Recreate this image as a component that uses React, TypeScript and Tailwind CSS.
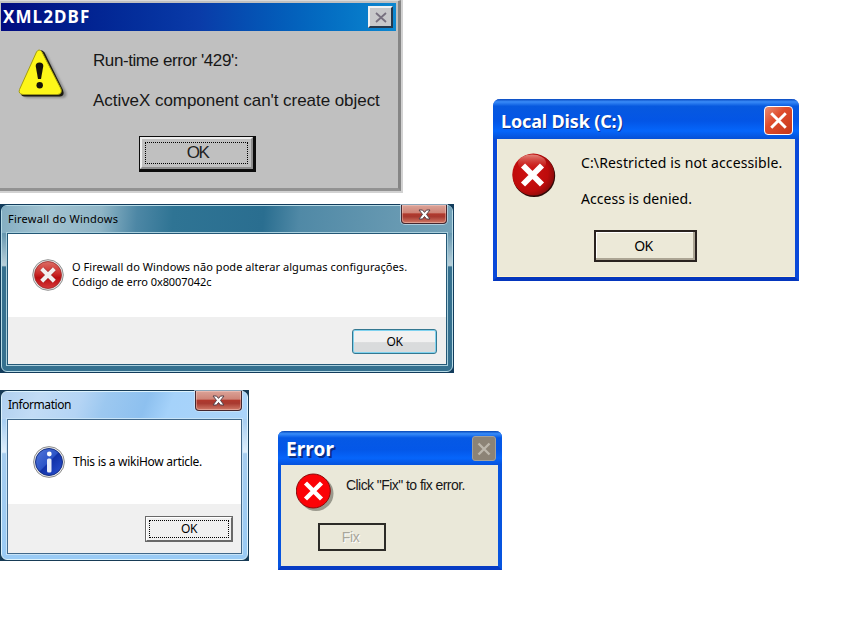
import React from "react";

const segoe = "font-['Noto_Sans','Open_Sans',sans-serif]";
const tahoma = "font-['Noto_Sans','DejaVu_Sans',sans-serif]";
const msSans = "font-['Liberation_Sans',sans-serif]";

function WarningIcon() {
  return (
    <svg width="54" height="54" viewBox="0 0 54 54" className="block shrink-0">
      <defs>
        <filter id="soft" x="-20%" y="-20%" width="140%" height="140%">
          <feGaussianBlur stdDeviation="1" />
        </filter>
      </defs>
      <path d="M26 5Q29 3 31 7L50 44Q52 49 47 50H11Q6 49 8 44Z" fill="#8b8b8b" filter="url(#soft)" />
      <path d="M22 4Q25 0.500 28.500 4.500L47 42Q49 48 44 48.500H8Q4 48 5 43Z" fill="#1b1a10" />
      <path d="M20.500 4Q23 0 26 4L45 41Q46.500 46 41.500 46.500H7Q2 46 3.500 41.500Z" fill="#fdf619" stroke="#a39c13" strokeWidth="1" />
      <path d="M19.700 18Q19.700 14.500 23.500 14.500Q27.300 14.500 27.300 18L25 31H22Z" fill="#15120a" />
      <circle cx="23.700" cy="37.300" r="3.200" fill="#15120a" />
    </svg>
  );
}

function GlossyErrorIcon({ size }: { size: number }) {
  return (
    <svg width={size} height={size} viewBox="0 0 32 32" className="block shrink-0">
      <defs>
        <linearGradient id="redGloss" x1="0" y1="0" x2="0" y2="1">
          <stop offset="0" stopColor="#dc6d65" />
          <stop offset="0.45" stopColor="#cb2b29" />
          <stop offset="0.6" stopColor="#b90d10" />
          <stop offset="1" stopColor="#d6373a" />
        </linearGradient>
      </defs>
      <circle cx="16" cy="16" r="15.300" fill="#e6e6e6" stroke="#8f8f8f" strokeWidth="1" />
      <circle cx="16" cy="16" r="13.500" fill="url(#redGloss)" stroke="#9c2a2a" strokeWidth="0.800" />
      <path d="M10 10L22 22M22 10L10 22" stroke="#8e1515" strokeWidth="5.200" />
      <path d="M9.700 9.700L22.300 22.300M22.300 9.700L9.700 22.300" stroke="#f3efef" strokeWidth="4.200" />
    </svg>
  );
}

function InfoIcon() {
  return (
    <svg width="32" height="32" viewBox="0 0 32 32" className="block shrink-0">
      <defs>
        <linearGradient id="blueGloss" x1="0" y1="0" x2="1" y2="1">
          <stop offset="0" stopColor="#5578d8" />
          <stop offset="0.48" stopColor="#2d55c8" />
          <stop offset="0.52" stopColor="#1232a8" />
          <stop offset="1" stopColor="#2b53d4" />
        </linearGradient>
      </defs>
      <circle cx="16" cy="16" r="15.400" fill="#ececec" stroke="#8d8d8d" strokeWidth="1" />
      <circle cx="16" cy="16" r="13.500" fill="url(#blueGloss)" stroke="#173083" strokeWidth="1" />
      <circle cx="16.300" cy="8" r="2.400" fill="#fff" />
      <rect x="14" y="12.500" width="4.500" height="14" rx="1.500" fill="#e9edf8" />
    </svg>
  );
}

function XpErrorIcon() {
  return (
    <svg width="44" height="46" viewBox="0 0 44 46" className="block shrink-0">
      <defs>
        <radialGradient id="xpRed" cx="0.4" cy="0.45" r="0.6">
          <stop offset="0" stopColor="#cf1212" />
          <stop offset="0.75" stopColor="#bd0b0b" />
          <stop offset="1" stopColor="#8c0b0b" />
        </radialGradient>
        <linearGradient id="xpShine" x1="0" y1="0" x2="0" y2="1">
          <stop offset="0" stopColor="#e3867c" />
          <stop offset="1" stopColor="#d0231c" stopOpacity="0" />
        </linearGradient>
      </defs>
      <circle cx="22" cy="22.800" r="21.200" fill="#2e0907" />
      <circle cx="21.300" cy="21.600" r="21" fill="url(#xpRed)" />
      <ellipse cx="20" cy="10" rx="14" ry="8.500" fill="url(#xpShine)" />
      <path d="M11 12.500L30 31.500M30 12.500L11 31.500" stroke="#fff" strokeWidth="5.800" />
    </svg>
  );
}

function FlatErrorIcon() {
  return (
    <svg width="39" height="39" viewBox="0 0 39 39" className="block shrink-0">
      <circle cx="20" cy="20.500" r="17.500" fill="#9a998d" />
      <circle cx="17.300" cy="18" r="17" fill="#fb0207" stroke="#8b0b0b" strokeWidth="1" />
      <path d="M9.500 10L25.500 26M25.500 10L9.500 26" stroke="#fff" strokeWidth="4.400" />
    </svg>
  );
}

function AeroClose({ className }: { className: string }) {
  return (
    <div
      className={`flex items-center justify-center rounded-b-[4px] border border-t-0 border-[#44272f] bg-[linear-gradient(to_bottom,#dba398_0%,#cf8578_42%,#b0392d_50%,#a83a30_65%,#d07a68_100%)] shadow-[0_0_0_1px_rgba(220,235,245,0.6),inset_0_0_0_1px_rgba(255,220,210,0.4)] ${className}`}
    >
      <svg width="13" height="11" viewBox="0 0 13 11">
        <path d="M1 1H4.500L6.500 3.400L8.500 1H12L8.500 5.400L12 10H8.500L6.500 7.500L4.500 10H1L4.500 5.400Z" fill="#fff" stroke="#544048" strokeWidth="1" />
      </svg>
    </div>
  );
}

function RuntimeDialog() {
  return (
    <section className={`absolute top-0 left-0 h-[193px] w-[403px] border-r-2 border-b-2 border-[#d2d2d2] bg-[#c0c0c0] ${msSans}`}>
      <div className="flex h-full flex-col border-t border-r-3 border-b-3 border-t-[#dadada] border-r-[#858585] border-b-[#929292] pt-[2px] pr-[2px] pl-px">
        <header className="flex h-[28px] shrink-0 items-center justify-between bg-linear-to-r from-[#020a80] via-[#0a3ba8] via-50% to-[#0d87d0] pr-[3px] pl-[2px]">
          <h1 className={`text-[17px] leading-[26px] font-bold tracking-[1.1px] text-white ${tahoma}`}>XML2DBF</h1>
          <div className="flex h-[22px] w-[25px] items-center justify-center border-2 border-t-[#f2f2f2] border-r-[#26384c] border-b-[#26384c] border-l-[#f2f2f2] bg-[#c8c8ca]">
            <svg width="12" height="11" viewBox="0 0 12 11">
              <path d="M1 1L11 10M11 1L1 10" stroke="#77707f" strokeWidth="1.800" />
            </svg>
          </div>
        </header>
        <div className="flex pt-[17px] pl-[15px]">
          <WarningIcon />
          <div className="pt-[3px] pl-[23px] text-[17px] leading-[20px] whitespace-nowrap text-[#171717]">
            <p className="tracking-[-0.42px]">Run-time error '429':</p>
            <p className="mt-[20px] tracking-[-0.05px]">ActiveX component can't create object</p>
          </div>
        </div>
        <button className="mt-[25px] ml-[138px] h-[36px] w-[117px] shrink-0 border-t border-r-3 border-b-3 border-l border-[#0c0c0c] text-[17px] leading-[20px] tracking-[-1.5px] text-[#222]">
          <span className="flex h-full w-full border-2 border-t-[#eee] border-r-[#8e8e8e] border-b-[#8e8e8e] border-l-[#eee] p-[3px]">
            <span className="flex flex-1 items-center justify-center border border-dotted border-black pl-[2px]">OK</span>
          </span>
        </button>
      </div>
    </section>
  );
}

function FirewallDialog() {
  return (
    <section className={`absolute top-[204px] left-0 h-[169px] w-[454px] bg-[#123c5c] p-px ${segoe}`}>
      <div className="flex h-full flex-col rounded-[6px] border border-[#b7dbe6] bg-[linear-gradient(to_bottom,#3f7b9b_0%,#6093ad_15%,#b9d0da_36%,#35708f_37%,#35708f_100%)] px-[5px] pb-[6px]">
        <header className="-mx-[5px] flex h-[27px] shrink-0 items-start justify-between rounded-t-[5px] bg-[linear-gradient(95deg,#84aec2_0%,#a3c3d1_10%,#8fb5c6_22%,#4d87a5_30%,#2f7494_38%,#2a6e90_58%,#5089a6_66%,#74a2b8_100%)] pr-[5px] pl-[6px]">
          <h2 className="pt-[4px] text-[11px] leading-[18px] tracking-[0.25px] text-black">Firewall do Windows</h2>
          <AeroClose className="-mt-px h-[19px] w-[46px]" />
        </header>
        <div className="flex min-h-0 flex-1 flex-col border border-[#245876] bg-white outline outline-[#a9cfdd]">
          <div className="flex h-[83px] shrink-0 pt-[25px] pl-[24px]">
            <GlossyErrorIcon size={32} />
            <div className="pl-[8px] text-[11px] leading-[15px] whitespace-nowrap text-black">
              <p className="tracking-[0.06px]">O Firewall do Windows não pode alterar algumas configurações.</p>
              <p className="tracking-[-0.08px]">Código de erro 0x8007042c</p>
            </div>
          </div>
          <footer className="flex flex-1 items-start justify-end bg-[#efefef] pt-[12px] pr-[9px]">
            <button className="h-[25px] w-[85px] rounded-[3px] border border-[#347891] bg-linear-to-b from-[#f1f1f1] from-50% to-[#d9dbdc] to-55% text-[12px] leading-[20px] tracking-[-0.4px] shadow-[inset_0_0_0_1px_#7fd2ef]">OK</button>
          </footer>
        </div>
      </div>
    </section>
  );
}

function InformationDialog() {
  return (
    <section className={`absolute top-[390px] left-0 h-[171px] w-[249px] bg-[#173b56] p-px ${segoe}`}>
      <div className="flex h-full flex-col rounded-[6px] border border-[#ddf3fd] bg-[linear-gradient(to_bottom,#b4d5f3_0%,#a9cff2_18%,#e0effb_36%,#a6cdef_37%,#9acbf5_100%)] px-[5px] pb-[5px]">
        <header className="-mx-[5px] flex h-[27px] shrink-0 items-start justify-between rounded-t-[5px] bg-[linear-gradient(110deg,#b0d0ef_0%,#c2dcf5_15%,#b4d4f4_32%,#9cc8f0_42%,#8dc0ef_58%,#a5d2fa_68%,#abd4fa_100%)] pr-[5px] pl-[6px]">
          <h2 className="pt-[4px] text-[12px] leading-[18px] tracking-[-0.45px] text-black">Information</h2>
          <AeroClose className="-mt-px h-[20px] w-[47px]" />
        </header>
        <div className="flex min-h-0 flex-1 flex-col border border-[#41688a] bg-white outline outline-[#c8e4f8]">
          <div className="flex h-[84px] shrink-0 pt-[26px] pl-[25px]">
            <InfoIcon />
            <p className="pt-[7px] pl-[8px] text-[12px] leading-[18px] tracking-[-0.28px] whitespace-nowrap text-black">This is a wikiHow article.</p>
          </div>
          <footer className="flex flex-1 items-start justify-end bg-[#f0f0f0] pt-[12px] pr-[8px]">
            <button className="flex h-[26px] w-[88px] border border-[#696969] bg-[#f0f0f0] text-[12px] leading-[18px] tracking-[-0.4px]">
              <span className="flex h-full flex-1 border border-t-white border-r-[#696969] border-b-[#696969] border-l-white p-[2px]">
                <span className="flex flex-1 items-center justify-center border border-dotted border-black">OK</span>
              </span>
            </button>
          </footer>
        </div>
      </div>
    </section>
  );
}

function FixDialog() {
  return (
    <section className={`absolute top-[431px] left-[278px] flex h-[139px] w-[224px] flex-col rounded-t-[6px] border-r-4 border-b-4 border-l-3 border-[#0754df] border-b-[#063bc4] bg-[#eae8d9] ${msSans}`}>
      <header className="-mr-[4px] -ml-[3px] flex h-[34px] shrink-0 items-start justify-between rounded-t-[6px] bg-[linear-gradient(to_bottom,#0645b5_0%,#388cf9_8%,#0659e5_20%,#0457e8_55%,#0665fb_80%,#0552dc_100%)] pt-[5px] pr-[6px] pl-[8px]">
        <h2 className={`text-[19px] leading-[26px] font-bold tracking-[0.1px] text-white [text-shadow:2px_2px_0_#072e88] ${tahoma}`}>Error</h2>
        <div className="flex h-[25px] w-[24px] items-center justify-center rounded-[3px] border border-[#a3a09a] bg-[#8c8376]">
          <svg width="14" height="14" viewBox="0 0 14 14">
            <path d="M1.500 1.500L12.500 12.500M12.500 1.500L1.500 12.500" stroke="#bdb7ac" strokeWidth="2.400" />
          </svg>
        </div>
      </header>
      <div className="flex h-[58px] shrink-0 pt-[8px] pl-[15px]">
        <FlatErrorIcon />
        <p className="pt-[3px] pl-[11px] text-[14px] leading-[18px] tracking-[-0.56px] whitespace-nowrap text-[#171717]">Click "Fix" to fix error.</p>
      </div>
      <button className="ml-[37px] h-[28px] w-[68px] shrink-0 border-2 border-[#2c2b27] pr-[3px] text-[14px] leading-[22px] tracking-[-0.4px] text-[#a8a69b] [text-shadow:1px_1px_0_#fff]">Fix</button>
    </section>
  );
}

function LocalDiskDialog() {
  return (
    <section className={`absolute top-[99px] left-[493px] flex h-[182px] w-[306px] flex-col rounded-t-[7px] border-r-4 border-b-4 border-l-4 border-[#0a49d9] border-b-[#0436bd] bg-[#ece9d8] shadow-[inset_1px_-1px_0_#fff3cf] ${tahoma}`}>
      <header className="-mx-[4px] flex h-[40px] shrink-0 items-start justify-between rounded-t-[7px] bg-[linear-gradient(to_bottom,#0747be_0%,#398bf8_7%,#0759df_18%,#0355e6_55%,#0566fb_80%,#0650d5_100%)] pt-[7px] pr-[6px] pl-[8px]">
        <h2 className="pt-[2px] text-[18px] leading-[26px] font-bold tracking-[-0.15px] text-white [text-shadow:1px_1px_0_#0b2f8c]">Local Disk (C:)</h2>
        <div className="flex h-[29px] w-[29px] items-center justify-center rounded-[4px] border border-white bg-linear-to-br from-[#e98a70] via-[#df4c2c] via-40% to-[#c5361a]">
          <svg width="19" height="19" viewBox="0 0 17 17">
            <path d="M2 2L15 15M15 2L2 15" stroke="#fff" strokeWidth="2.600" />
          </svg>
        </div>
      </header>
      <div className="flex h-[91px] shrink-0 pt-[14px] pl-[15px]">
        <XpErrorIcon />
        <div className="pl-[25px] text-[14px] leading-[20px] whitespace-nowrap text-black">
          <p className="tracking-[0.13px]">C:\Restricted is not accessible.</p>
          <p className="mt-[16px] tracking-[0.04px]">Access is denied.</p>
        </div>
      </div>
      <button className="ml-[97px] h-[32px] w-[103px] shrink-0 border-2 border-[#29221f] pr-[4px] text-[14px] leading-[24px] tracking-[-0.5px] shadow-[inset_-2px_-2px_0_#aca594,inset_1px_1px_0_#fff]">OK</button>
    </section>
  );
}

export default function App() {
  return (
    <main className="relative h-[617px] w-[861px] overflow-hidden bg-white">
      <RuntimeDialog />
      <FirewallDialog />
      <InformationDialog />
      <FixDialog />
      <LocalDiskDialog />
    </main>
  );
}
